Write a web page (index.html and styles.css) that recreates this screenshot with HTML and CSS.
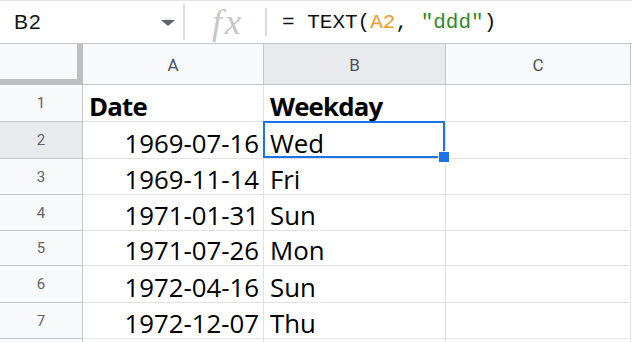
FILE: index.html
```html
<!DOCTYPE html>
<html>
<head>
<meta charset="utf-8">
<link rel="stylesheet" href="styles.css">
</head>
<body>
<div class="formula-bar">
  <div class="namebox"><span class="ref">B2</span><span class="caret"></span></div>
  <div class="sep"></div>
  <div class="fx">fx</div>
  <div class="sep sep2"></div>
  <div class="formula">= TEXT(<span class="f-ref">A2</span>, <span class="f-str">"ddd"</span>)</div>
</div>
<div class="sheet">
  <div class="corner"></div>
  <div class="colhead">A</div>
  <div class="colhead sel">B</div>
  <div class="colhead">C</div>

  <div class="rowhead">1</div>
  <div class="cell bold">Date</div>
  <div class="cell bold">Weekday</div>
  <div class="cell"></div>

  <div class="rowhead sel">2</div>
  <div class="cell num">1969-07-16</div>
  <div class="cell active">Wed<span class="handle"></span></div>
  <div class="cell"></div>

  <div class="rowhead">3</div>
  <div class="cell num">1969-11-14</div>
  <div class="cell">Fri</div>
  <div class="cell"></div>

  <div class="rowhead">4</div>
  <div class="cell num">1971-01-31</div>
  <div class="cell">Sun</div>
  <div class="cell"></div>

  <div class="rowhead">5</div>
  <div class="cell num">1971-07-26</div>
  <div class="cell">Mon</div>
  <div class="cell"></div>

  <div class="rowhead">6</div>
  <div class="cell num">1972-04-16</div>
  <div class="cell">Sun</div>
  <div class="cell"></div>

  <div class="rowhead">7</div>
  <div class="cell num">1972-12-07</div>
  <div class="cell">Thu</div>
  <div class="cell"></div>

  <div class="rowhead"></div>
  <div class="cell"></div>
  <div class="cell"></div>
  <div class="cell"></div>
</div>
</body>
</html>
```
FILE: styles.css
```css
html, body {
  margin: 0;
  padding: 0;
  background: #fff;
  overflow: hidden;
}
body {
  width: 632px;
  height: 342px;
  font-family: "Open Sans", "Noto Sans", sans-serif;
}
.formula-bar {
  box-sizing: border-box;
  height: 44px;
  border-top: 1px solid #e6e6e6;
  border-bottom: 1px solid #c7c7c7;
  display: flex;
  align-items: center;
  background: #fff;
}
.namebox {
  width: 183px;
  display: flex;
  align-items: center;
  justify-content: space-between;
  padding-left: 14px;
  padding-right: 8px;
  box-sizing: border-box;
}
.ref {
  font-family: Arial, "Liberation Sans", sans-serif;
  font-size: 21px;
  letter-spacing: 1px;
  color: #111;
}
.caret {
  width: 0;
  height: 0;
  border-left: 7px solid transparent;
  border-right: 7px solid transparent;
  border-top: 6px solid #5f6368;
  margin-top: 2px;
}
.sep {
  width: 2px;
  height: 36px;
  background: #dcdcdc;
}
.fx {
  width: 80px;
  box-sizing: border-box;
  padding-left: 6px;
  text-align: center;
  font-family: "Liberation Serif", "DejaVu Serif", serif;
  font-style: italic;
  font-size: 36px;
  letter-spacing: 3px;
  color: #c6c6c6;
  line-height: 42px;
  height: 42px;
}
.sep2 {
  height: 28px;
}
.formula {
  padding-left: 15px;
  font-family: "Liberation Mono", monospace;
  font-size: 21px;
  color: #111;
  white-space: pre;
}
.f-ref { color: #f09a2c; }
.f-str { color: #2f8a26; }

.sheet {
  display: grid;
  grid-template-columns: 83px 181px 182px 185px;
  grid-template-rows: 41px 37px 37px 36px 36px 35px 37px 36px 20px;
}
.sheet > div {
  box-sizing: border-box;
}
.corner {
  background: #f8f9fa;
  border-right: 6px solid #bfbfbf;
  border-bottom: 6px solid #bfbfbf;
}
.colhead {
  background: #f8f9fa;
  border-right: 1px solid #c4c7c5;
  border-bottom: 1px solid #c4c7c5;
  display: flex;
  align-items: center;
  justify-content: center;
  font-family: Roboto, Arial, sans-serif;
  font-size: 17px;
  color: #4d5156;
  padding-top: 2px;
}
.colhead.sel, .rowhead.sel {
  background: #e8eaed;
}
.rowhead {
  background: #f8f9fa;
  border-right: 1px solid #c4c7c5;
  border-bottom: 1px solid #c4c7c5;
  display: flex;
  align-items: center;
  justify-content: center;
  font-family: Roboto, Arial, sans-serif;
  font-size: 15px;
  color: #5f6368;
}
.cell {
  position: relative;
  border-right: 1px solid #e2e2e2;
  border-bottom: 1px solid #e2e2e2;
  display: flex;
  align-items: flex-end;
  padding: 0 4px 0 6px;
  font-size: 25.8px;
  line-height: 30px;
  color: #000;
  white-space: nowrap;
}
.cell.bold {
  font-weight: 700;
  letter-spacing: -0.8px;
}
.cell.num {
  justify-content: flex-end;
}
.cell.active::after {
  content: "";
  position: absolute;
  left: -1px;
  top: -1px;
  right: 0;
  bottom: 0;
  border: 2px solid #1a73e8;
  box-sizing: border-box;
  pointer-events: none;
}
.handle {
  position: absolute;
  left: 175px;
  top: 30px;
  width: 10px;
  height: 10px;
  background: #1a73e8;
  z-index: 2;
  outline: 1px solid #fff;
}
```
